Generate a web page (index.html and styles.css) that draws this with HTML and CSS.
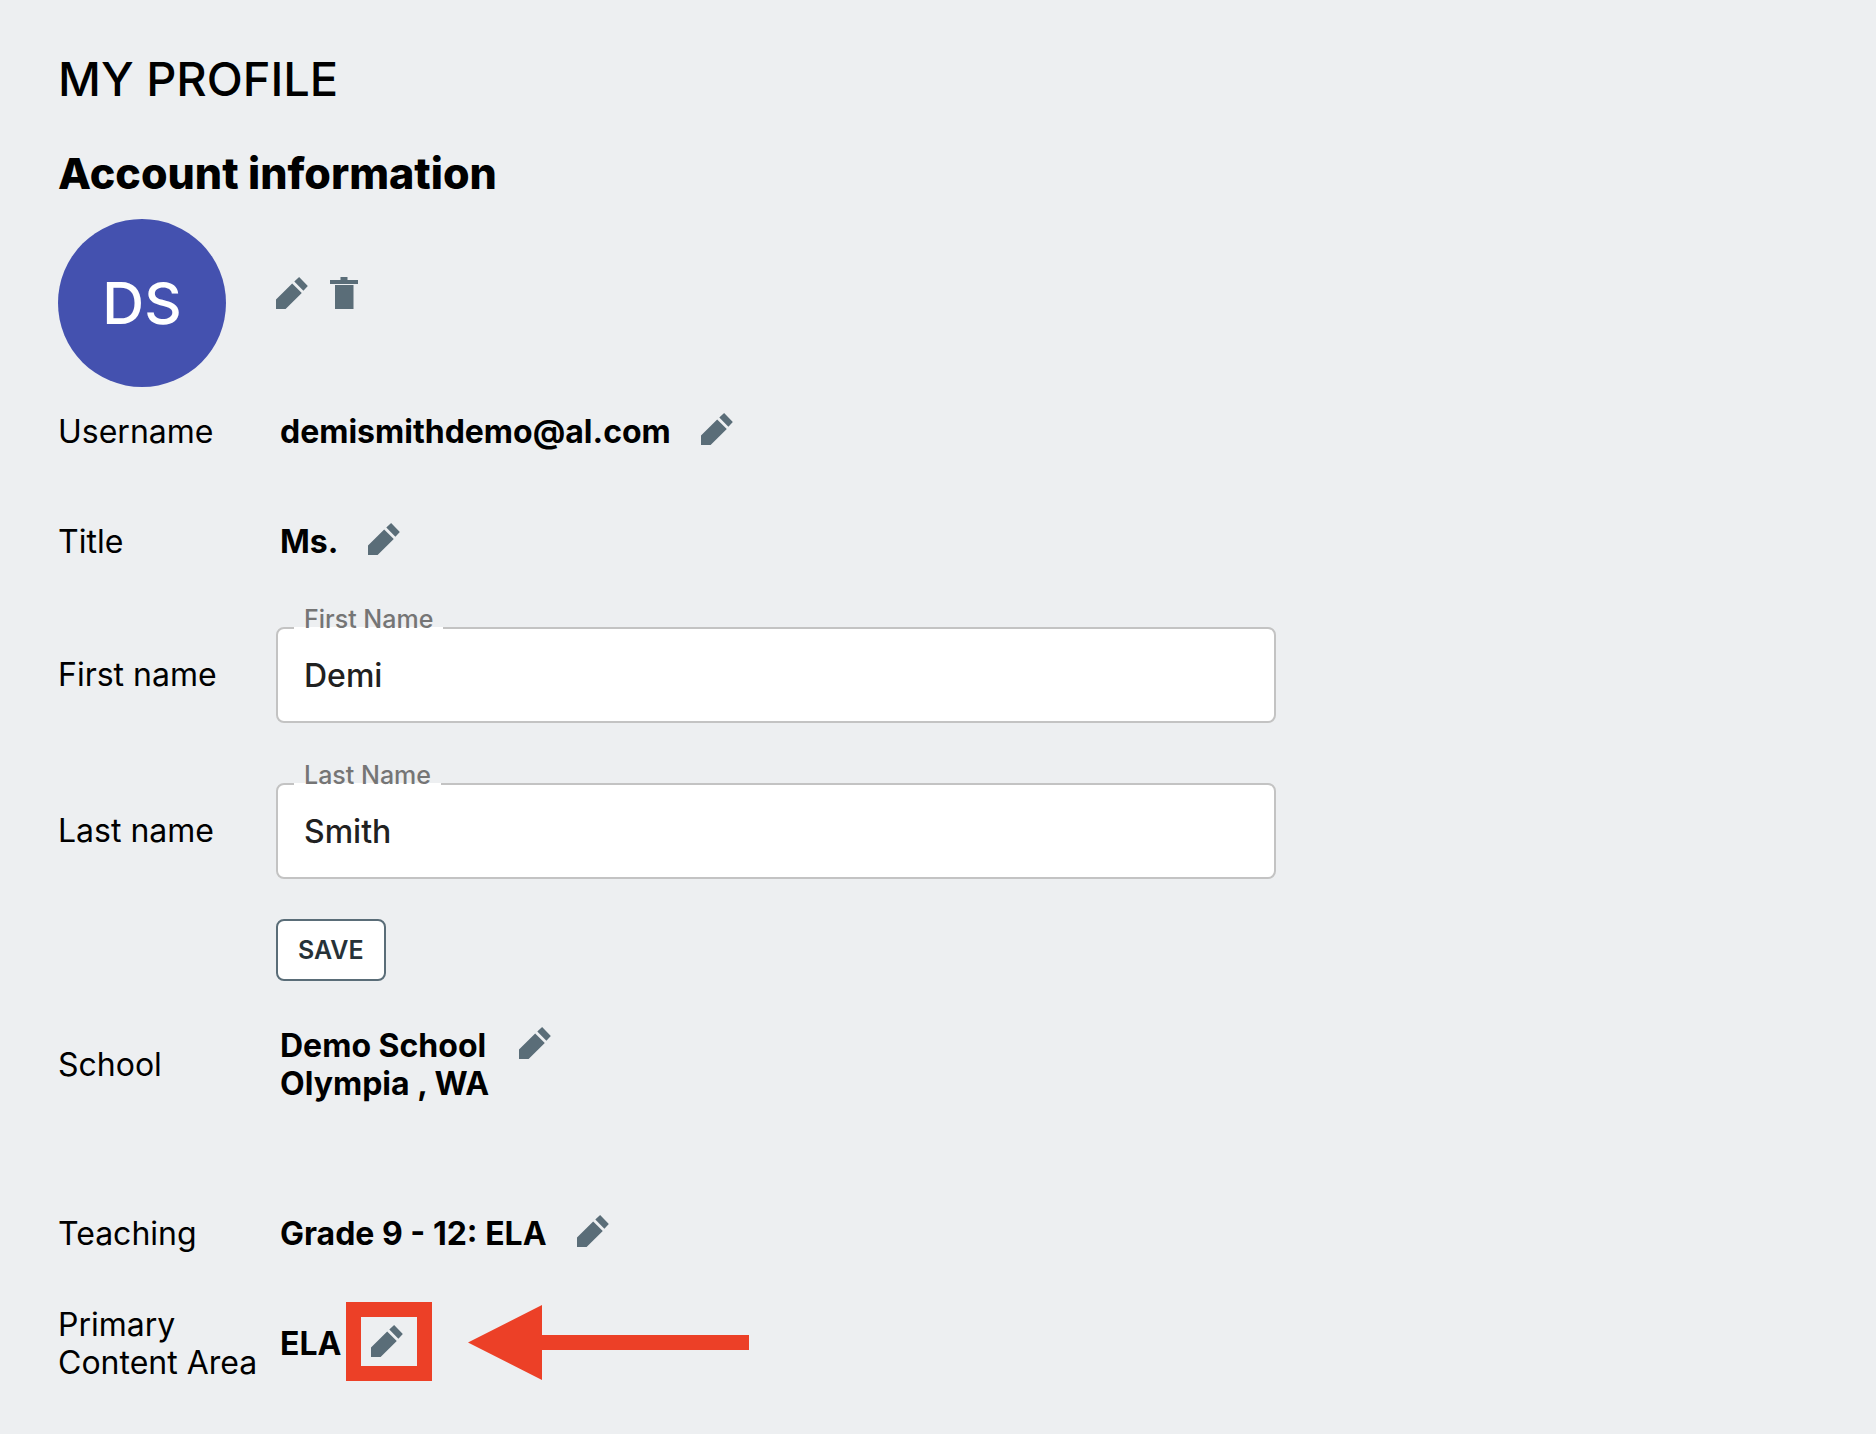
FILE: index.html
```html
<!DOCTYPE html>
<html lang="en">
<head>
<meta charset="utf-8">
<meta name="viewport" content="width=device-width, initial-scale=1">
<title>My Profile</title>
<link rel="stylesheet" href="styles.css">
</head>
<body>
<svg class="sprite" aria-hidden="true">
  <symbol id="pencil" viewBox="3 3 18 18"><path d="M3 15.6V21h5.4l9.1-9-5.4-5.4zM20.9 8 16 3 13.3 5.6l5.1 5.1z"/></symbol>
  <symbol id="trash" viewBox="0 0 28 32"><path d="M0 3h10.500V0h7v3H28v4H0zM5 8h18.500v24H5z"/></symbol>
</svg>
<main class="profile">
  <h1 class="page-title">MY PROFILE</h1>
  <h2 class="section-title">Account information</h2>

  <div class="row">
    <div class="avatar">DS</div>
    <div class="avatar-actions">
      <button class="icon-button" type="button" aria-label="Edit picture"><svg class="icon"><use href="#pencil"/></svg></button>
      <button class="icon-button" type="button" aria-label="Delete picture"><svg class="icon icon-trash"><use href="#trash"/></svg></button>
    </div>
  </div>

  <div class="row row-username">
    <div class="row-label">Username</div>
    <div class="row-value">demismithdemo@al.com
      <button class="icon-button" type="button" aria-label="Edit username"><svg class="icon"><use href="#pencil"/></svg></button>
    </div>
  </div>

  <div class="row row-title">
    <div class="row-label">Title</div>
    <div class="row-value">Ms.
      <button class="icon-button" type="button" aria-label="Edit title"><svg class="icon"><use href="#pencil"/></svg></button>
    </div>
  </div>

  <form class="name-form">
    <div class="row">
      <div class="row-label">First name</div>
      <div class="field">
        <input class="field-input" id="first-name" type="text" value="Demi">
        <label class="field-label" for="first-name">First Name</label>
      </div>
    </div>
    <div class="row">
      <div class="row-label">Last name</div>
      <div class="field">
        <input class="field-input" id="last-name" type="text" value="Smith">
        <label class="field-label" for="last-name">Last Name</label>
      </div>
    </div>
    <button class="save-button" type="button">SAVE</button>
  </form>

  <div class="row row-school">
    <div class="row-label">School</div>
    <div class="row-value"><span>Demo School<br>Olympia , WA</span>
      <button class="icon-button" type="button" aria-label="Edit school"><svg class="icon"><use href="#pencil"/></svg></button>
    </div>
  </div>

  <div class="row row-teaching">
    <div class="row-label">Teaching</div>
    <div class="row-value">Grade 9 - 12: ELA
      <button class="icon-button" type="button" aria-label="Edit teaching"><svg class="icon"><use href="#pencil"/></svg></button>
    </div>
  </div>

  <div class="row row-content-area">
    <div class="row-label">Primary<br>Content Area</div>
    <div class="row-value">ELA
      <button class="icon-button highlighted" type="button" aria-label="Edit primary content area">
        <svg class="icon"><use href="#pencil"/></svg>
        <svg class="arrow" viewBox="0 0 281 75" aria-hidden="true"><path d="M0 37.500 74 0v30h207v15H74v30z"/></svg>
      </button>
    </div>
  </div>
</main>
</body>
</html>
```

FILE: styles.css
```css
* {
  box-sizing: border-box;
}

body {
  margin: 0;
  background: #edeff1;
  color: #000;
  font-family: Inter, "Open Sans", sans-serif;
  font-size: 32px;
  line-height: 38px;
}

.sprite {
  display: none;
}

.profile {
  padding: 51px 58px;
}

.page-title {
  margin: 0 0 42px;
  font-size: 47px;
  font-weight: 500;
  line-height: 56px;
}

.section-title {
  margin: 0 0 22px;
  font-size: 43px;
  font-weight: 800;
  line-height: 48px;
}

.row {
  display: grid;
  grid-template-columns: 218px minmax(0, 1000px);
  align-items: center;
}

.row-value {
  display: flex;
  align-items: flex-start;
  gap: 30px;
  padding-left: 4px;
  font-weight: 700;
}

.avatar {
  display: flex;
  align-items: center;
  justify-content: center;
  width: 168px;
  height: 168px;
  border-radius: 50%;
  background: #4451af;
  color: #fff;
  font-size: 58px;
  font-weight: 500;
}

.avatar-actions {
  display: flex;
  gap: 22px;
  padding-bottom: 20px;
}

.icon-button {
  position: relative;
  display: flex;
  padding: 0;
  border: 0;
  background: none;
  color: #5a6d78;
  cursor: pointer;
}

.icon {
  width: 32px;
  height: 32px;
  fill: currentColor;
}

.icon-trash {
  width: 28px;
}

.row-username {
  min-height: 90px;
}

.row-title {
  min-height: 90px;
  margin: 20px 0 40px;
}

.name-form {
  display: grid;
  gap: 60px;
}

.field {
  position: relative;
}

.field-input {
  display: block;
  width: 100%;
  height: 96px;
  padding: 0 26px;
  border: 2px solid #c3c3c3;
  border-radius: 8px;
  background: #fff;
  color: #212121;
  font: inherit;
  font-weight: 500;
}

/* The label sits on the top border and covers it with a white notch. */
.field-label {
  position: absolute;
  top: -18px;
  left: 18px;
  padding: 0 10px;
  background: linear-gradient(#fff, #fff) bottom / 100% 2px no-repeat;
  color: #757575;
  font-size: 25px;
  font-weight: 500;
  line-height: 20px;
}

.save-button {
  justify-self: start;
  height: 62px;
  margin: -20px 0 0 218px;
  padding: 0 20px;
  border: 2px solid #5a6d78;
  border-radius: 8px;
  background: #fff;
  color: #263238;
  font: inherit;
  font-size: 25px;
  font-weight: 600;
}

.row-school {
  margin-top: 46px;
}

.row-teaching {
  margin-top: 112px;
}

.row-content-area {
  margin-top: 53px;
}

.highlighted::before {
  position: absolute;
  top: -23px;
  left: -25px;
  box-sizing: border-box;
  width: 86px;
  height: 79px;
  border: 15px solid #ec4027;
  content: "";
}

.arrow {
  position: absolute;
  top: -20px;
  left: 97px;
  width: 281px;
  height: 75px;
  fill: #ec4027;
}
```
